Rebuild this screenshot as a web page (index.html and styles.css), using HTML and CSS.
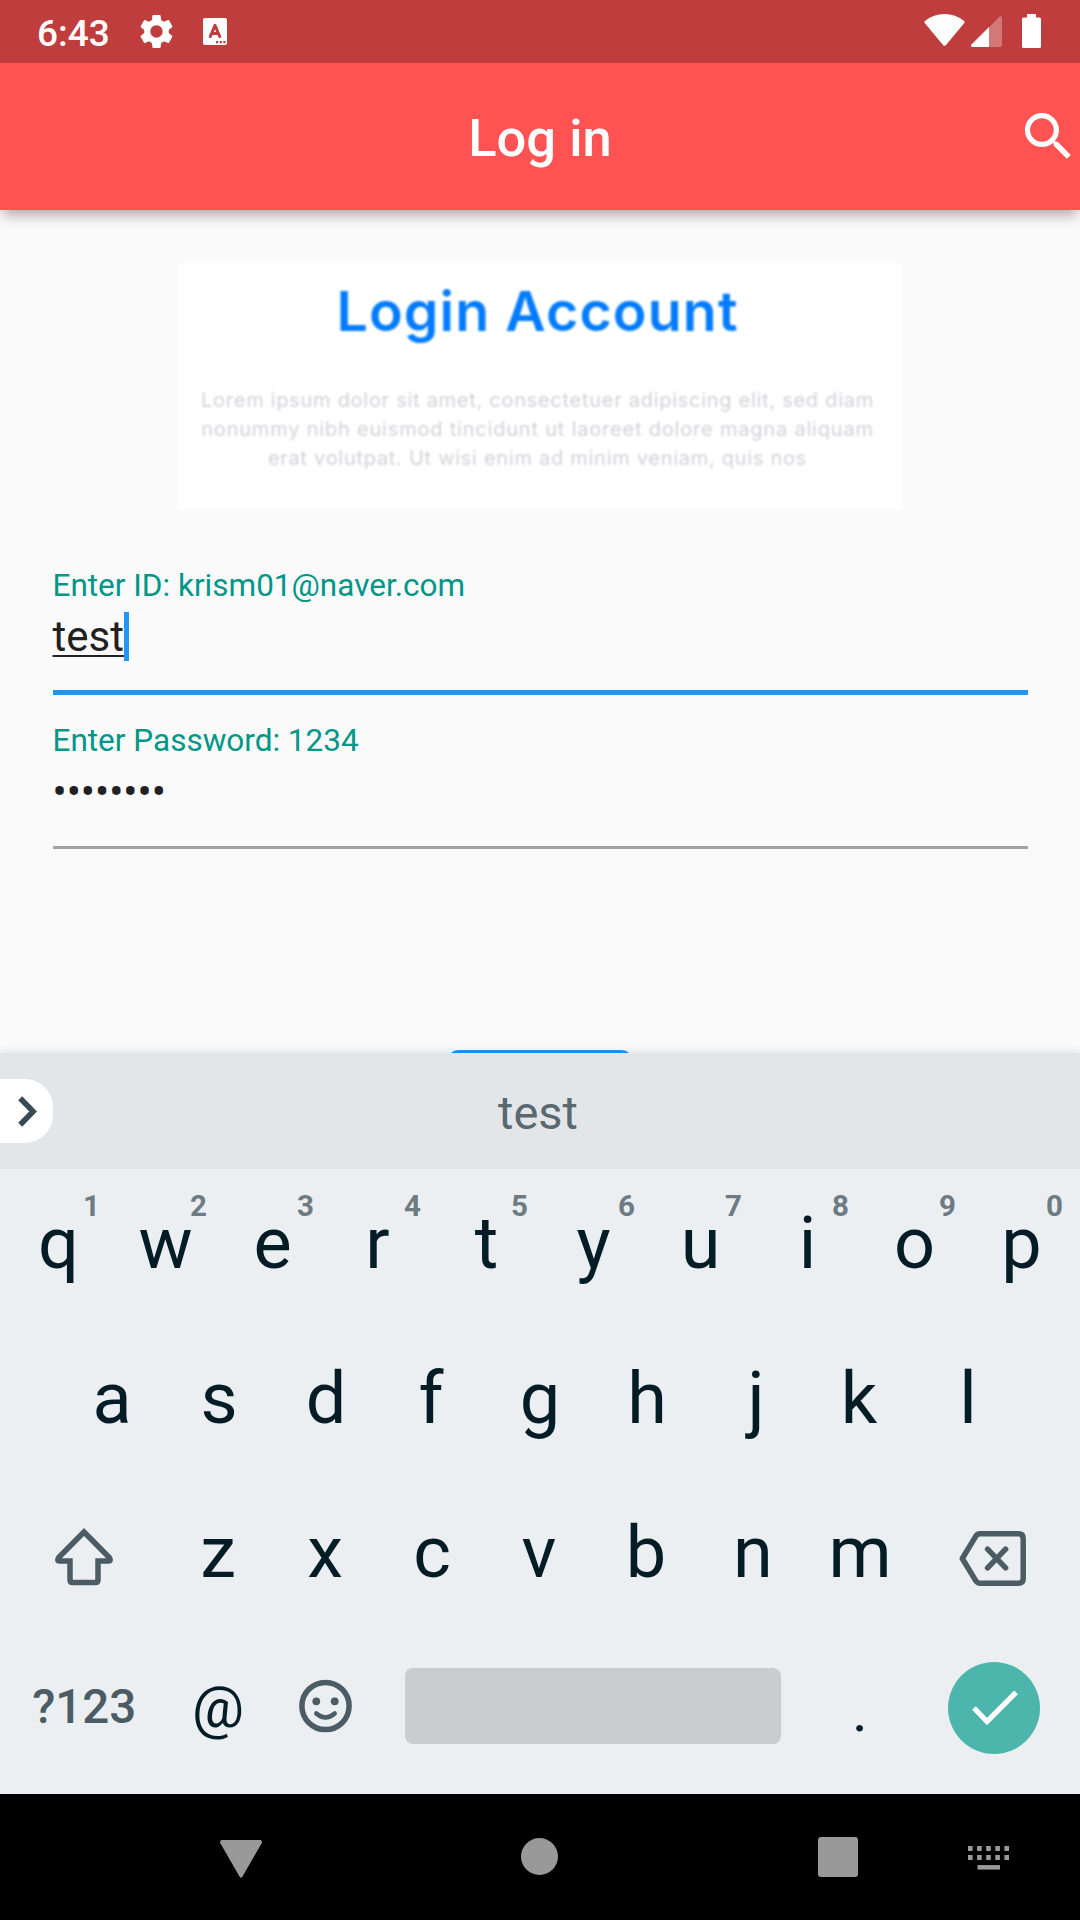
FILE: index.html
```html
<!DOCTYPE html>
<html lang="en">
<head>
<meta charset="utf-8">
<title>Log in</title>
<link rel="stylesheet" href="styles.css">
</head>
<body>
<div class="screen">
  <header class="top">
    <div class="status-bar">
      <span class="clock">6:43</span>
      <svg class="status-gear" viewBox="0 0 24 24"><path fill="#fff" d="M19.14 12.94c.04-.3.06-.61.06-.94 0-.32-.02-.64-.07-.94l2.03-1.58c.18-.14.23-.41.12-.61l-1.92-3.32c-.12-.22-.37-.29-.59-.22l-2.39.96c-.5-.38-1.03-.7-1.62-.94l-.36-2.54c-.04-.24-.24-.41-.48-.41h-3.84c-.24 0-.43.17-.47.41l-.36 2.54c-.59.24-1.13.57-1.62.94l-2.39-.96c-.22-.08-.47 0-.59.22L2.74 8.87c-.12.21-.08.47.12.61l2.03 1.58c-.05.3-.09.63-.09.94s.02.64.07.94l-2.03 1.58c-.18.14-.23.41-.12.61l1.92 3.32c.12.22.37.29.59.22l2.39-.96c.5.38 1.03.7 1.62.94l.36 2.54c.05.24.24.41.48.41h3.84c.24 0 .44-.17.47-.41l.36-2.54c.59-.24 1.13-.56 1.62-.94l2.39.96c.22.08.47 0 .59-.22l1.92-3.32c.12-.22.07-.47-.12-.61l-2.01-1.58zM12 15.6c-1.98 0-3.6-1.62-3.6-3.6s1.62-3.6 3.6-3.6 3.6 1.62 3.6 3.6-1.62 3.6-3.6 3.6z"/></svg>
      <svg class="status-ime" viewBox="0 0 24 27"><rect width="24" height="27" rx="2" fill="#fff"/><path d="M7.3 18.5 12 7.3l4.7 11.2M8.8 15.6h6.4" fill="none" stroke="#c03d3d" stroke-width="3" stroke-linecap="round" stroke-linejoin="round"/><path d="M13 23h2.2v2.2H13zM16.7 23h2.2v2.2h-2.2zM20.3 23h2.2v2.2h-2.2z" fill="#c03d3d"/></svg>
      <svg class="status-wifi" viewBox="0 0 41 32"><path fill="#fff" d="M.9 9.3Q-.3 7.9 1 6.9 9.500 0 20.500 0T40 6.900q1.300 1 .1 2.400L22 30.900q-1.500 1.700-3 0z"/></svg>
      <svg class="status-signal" viewBox="0 0 31 31"><path fill="#fff" opacity=".3" d="M18 11.500 28 1q3-2 3 1v27q0 2-2 2H18z"/><path fill="#fff" d="M18 11v20H1.500q-2.500-.5-1-2.500z"/></svg>
      <svg class="status-battery" viewBox="0 0 19 34"><path fill="#fff" d="M5 0h9v3.500h3.500q1.500 0 1.500 1.500v27.500q0 1.500-1.500 1.500h-16Q0 34 0 32.500V5q0-1.500 1.500-1.500H5z"/></svg>
    </div>
    <div class="app-bar">
      <h1 class="title">Log in</h1>
      <svg class="search" viewBox="0 0 24 24"><path fill="#fff" d="M15.500 14h-.79l-.28-.27C15.410 12.590 16 11.110 16 9.500 16 5.910 13.090 3 9.500 3S3 5.910 3 9.500 5.910 16 9.500 16c1.610 0 3.090-.59 4.230-1.570l.27.28v.79l5 4.990L20.490 19l-4.990-5zm-6 0C7.010 14 5 11.990 5 9.500S7.010 5 9.500 5 14 7.010 14 9.500 11.990 14 9.500 14z"/></svg>
    </div>
  </header>

  <main class="content">
    <section class="banner">
      <h2 class="banner-title">Login Account</h2>
      <p class="banner-text">
        <span class="line line-1">Lorem ipsum dolor sit amet, consectetuer adipiscing elit, sed diam</span>
        <span class="line line-2">nonummy nibh euismod tincidunt ut laoreet dolore magna aliquam</span>
        <span class="line line-3">erat volutpat. Ut wisi enim ad minim veniam, quis nos</span>
      </p>
    </section>
    <div class="field focused">
      <div class="label">Enter ID: krism01@naver.com</div>
      <div class="value"><span class="composing">test</span><span class="caret"></span></div>
    </div>
    <div class="field">
      <div class="label">Enter Password: 1234</div>
      <div class="value">••••••••</div>
    </div>
    <div class="login-button"></div>
  </main>

  <section class="keyboard">
    <div class="suggestions">
      <div class="expand"><svg class="chevron" viewBox="0 0 19 31"><path d="M2.200 2.200 15.200 15.500 2.200 28.800" fill="none" stroke="#394a54" stroke-width="5.600"/></svg></div>
      <span class="suggestion">test</span>
    </div>
    <div class="keys">
      <div class="row">
        <div class="key">q<span class="hint">1</span></div><div class="key">w<span class="hint">2</span></div><div class="key">e<span class="hint">3</span></div><div class="key nudge-left">r<span class="hint">4</span></div><div class="key">t<span class="hint">5</span></div><div class="key">y<span class="hint">6</span></div><div class="key">u<span class="hint">7</span></div><div class="key">i<span class="hint">8</span></div><div class="key">o<span class="hint">9</span></div><div class="key">p<span class="hint">0</span></div>
      </div>
      <div class="row">
        <div class="key">a</div><div class="key">s</div><div class="key">d</div><div class="key nudge-left">f</div><div class="key">g</div><div class="key">h</div><div class="key nudge-right">j</div><div class="key nudge-left">k</div><div class="key">l</div>
      </div>
      <div class="row lower">
        <div class="key wide"><svg class="shift" viewBox="0 0 60 58"><path d="M30 4 55.300 29.500q2.500 4-1.500 3.500H44v19q0 2.500-2.500 2.500h-23q-2.500 0-2.500-2.500V33H6.200q-4 .5-1.500-3.500z" fill="none" stroke="#4b5c65" stroke-width="5.500"/></svg></div>
        <div class="key">z</div><div class="key">x</div><div class="key">c</div><div class="key">v</div><div class="key">b</div><div class="key">n</div><div class="key">m</div>
        <div class="key wide"><svg class="backspace" viewBox="0 0 67 55"><path d="M21 2.800h38.500q4.700 0 4.700 4.700v40q0 4.700-4.700 4.700H21q-2.500 0-4-2L3.300 27.500 17 4.800q1.500-2 4-2z" fill="none" stroke="#4b5c65" stroke-width="5.500" stroke-linejoin="round"/><path d="m28.600 18.200 18 18.600m0-18.600-18 18.600" stroke="#4b5c65" stroke-width="5.500" stroke-linecap="round"/></svg></div>
      </div>
      <div class="row lower">
        <div class="key wide symbols">?123</div>
        <div class="key at">@</div>
        <div class="key"><svg class="smiley" viewBox="0 0 53 53"><circle cx="26.500" cy="26.500" r="23.600" fill="none" stroke="#4b5c65" stroke-width="5.500"/><circle cx="17.300" cy="21.800" r="3.900" fill="#4b5c65"/><circle cx="35.700" cy="21.800" r="3.900" fill="#4b5c65"/><path d="M17.300 34q9.200 8 18.400 0" fill="none" stroke="#4b5c65" stroke-width="4.500" stroke-linecap="round"/></svg></div>
        <div class="key space"><div class="space-bar"></div></div>
        <div class="key period">.</div>
        <div class="key wide"><div class="enter"><svg class="check" viewBox="0 0 46 36"><path d="m2 18 13 13.500L44 2.300" fill="none" stroke="#fff" stroke-width="5.200"/></svg></div></div>
      </div>
    </div>
  </section>

  <nav class="nav-bar">
    <svg class="nav-back" viewBox="0 0 42 38"><path fill="#999" d="M1.500 0h39q2 .5 1.300 3L22.500 36.500q-1.500 2.500-3 0L.2 3Q-.5.5 1.500 0z"/></svg>
    <div class="nav-home"></div>
    <div class="nav-recent"></div>
    <svg class="nav-keyboard" viewBox="0 0 41 24"><path d="M0 2.500h41M0 11.500h41" stroke="#999" stroke-width="5" stroke-dasharray="4.600 4.500"/><path d="M9.500 21.300h22.500" stroke="#999" stroke-width="4.500"/></svg>
  </nav>
</div>
</body>
</html>
```
FILE: styles.css
```css
* { box-sizing: border-box; }
body { margin: 0; font-family: Roboto, "Liberation Sans", sans-serif; }
svg { display: block; flex: none; }
.screen { width: 1080px; height: 1920px; display: flex; flex-direction: column; overflow: hidden; background: #fafafa; }

.top { flex: none; background: #ff5252; box-shadow: 0 8px 13px -3px rgba(0, 0, 0, .33); }
.status-bar { height: 63px; padding: 0 39px 0 37px; display: flex; align-items: flex-start; background: #c03d3d; }
.clock { width: 74px; font-size: 37px; line-height: 67px; font-weight: 500; color: #fff; }
.status-gear { width: 41px; height: 41px; margin: 11px 0 0 25px; }
.status-ime { width: 24px; height: 27px; margin: 18px 0 0 26px; }
.status-wifi { width: 41px; height: 32px; margin: 14px 0 0 auto; }
.status-signal { width: 31px; height: 31px; margin: 16px 0 0 6px; }
.status-battery { width: 19px; height: 34px; margin: 14px 0 0 20px; }
.app-bar { height: 147px; display: flex; align-items: center; padding-left: 63px; }
.title { flex: 1; margin: 2px 0 0; font-size: 52.500px; font-weight: 500; line-height: 62px; text-align: center; color: #fff; }
.search { width: 63px; height: 63px; }

.content { height: 843px; flex: none; padding: 53px 52.500px 0; display: flex; flex-direction: column; }
.banner { align-self: center; width: 724px; height: 246px; flex: none; background: #fff; font-family: Inter, "Open Sans", sans-serif; text-align: center; }
.banner-title { margin: 18px 5px 0 0; font-size: 55.500px; line-height: 60px; font-weight: 600; letter-spacing: 1.100px; color: #027bfc; filter: blur(.8px); }
.banner-text { margin: 45px 5px 0 0; font-size: 20px; line-height: 29px; letter-spacing: .720px; color: #d2d2d8; filter: blur(.8px); }
.line { display: block; white-space: nowrap; }
.line-2 { letter-spacing: .800px; }

.field { height: 154px; flex: none; border-bottom: 3px solid #a3a3a3; display: flex; flex-direction: column; }
.banner + .field { margin-top: 60px; height: 126px; }
.field.focused { border-bottom: 5px solid #2196f3; }
.label { font-size: 31.500px; line-height: 34px; color: #009688; }
.field + .field .label { margin-top: 29px; }
.value { display: flex; font-size: 42px; line-height: 49px; margin-top: 9px; color: #212121; }
.composing { text-decoration: underline; text-decoration-thickness: 2px; text-underline-offset: 4px; text-decoration-skip-ink: none; }
.caret { width: 5.300px; height: 49px; background: #2196f3; }
.login-button { align-self: center; flex: none; width: 184px; height: 94px; margin-top: 201px; border-radius: 10px; background: #2196f3; }

.keyboard { position: relative; flex: none; height: 741px; background: #ebeff2; box-shadow: 0 0 10px rgba(0, 0, 0, .12); }
.suggestions { height: 116px; display: grid; grid-template-columns: 54px 1fr 54px; align-items: center; background: #e2e6e9; }
.expand { width: 53px; height: 64px; display: flex; align-items: center; justify-content: flex-end; padding-right: 16px; border-radius: 0 28px 28px 0; background: #fff; }
.chevron { width: 19px; height: 31px; }
.suggestion { font-size: 47px; line-height: 56px; text-align: center; margin-top: 3px; margin-right: 4px; color: #5a6970; }
.keys { padding: 0 5px; color: #041c26; }
.row { height: 154.500px; padding-bottom: 4px; display: flex; justify-content: center; }
.row.lower { margin-left: -2px; }
.key { position: relative; flex: none; width: 107px; display: flex; align-items: center; justify-content: center; font-size: 72px; line-height: 84px; }
.key.wide { width: 160.500px; }
.key.space { width: 428px; }
.nudge-left { padding-right: 4px; }
.nudge-right { padding-left: 4px; }
.hint { position: absolute; top: 20px; right: 12px; font-size: 29.500px; line-height: 34px; font-weight: 700; color: #6e7b82; }
.shift { width: 60px; height: 58px; margin-top: 7px; }
.backspace { width: 67px; height: 55px; margin: 11px 2px 0 0; }
.key.symbols { font-size: 47.500px; font-weight: 500; padding-bottom: 1px; color: #4b5c65; }
.key.at { font-size: 58px; padding-bottom: 1px; }
.key.period { font-size: 60px; padding-top: 7px; }
.smiley { width: 53px; height: 54px; margin-top: -4px; }
.space-bar { width: 376px; height: 76px; margin-top: -4px; border-radius: 8px; background: #c9cdd0; }
.enter { width: 92px; height: 92px; border-radius: 50%; display: flex; align-items: center; justify-content: center; background: #4db6ac; }
.check { width: 46px; height: 36px; margin-left: 2px; }

.nav-bar { flex: none; height: 126px; display: flex; align-items: center; padding-left: 220px; background: #000; }
.nav-back { width: 42px; height: 38px; margin-top: 4px; }
.nav-home { width: 37px; height: 37px; margin: -1px 0 0 259px; border-radius: 50%; background: #999; }
.nav-recent { width: 40px; height: 40px; margin-left: 260px; border-radius: 3px; background: #999; }
.nav-keyboard { width: 41px; height: 24px; margin-left: 110px; margin-top: 1px; }
```
